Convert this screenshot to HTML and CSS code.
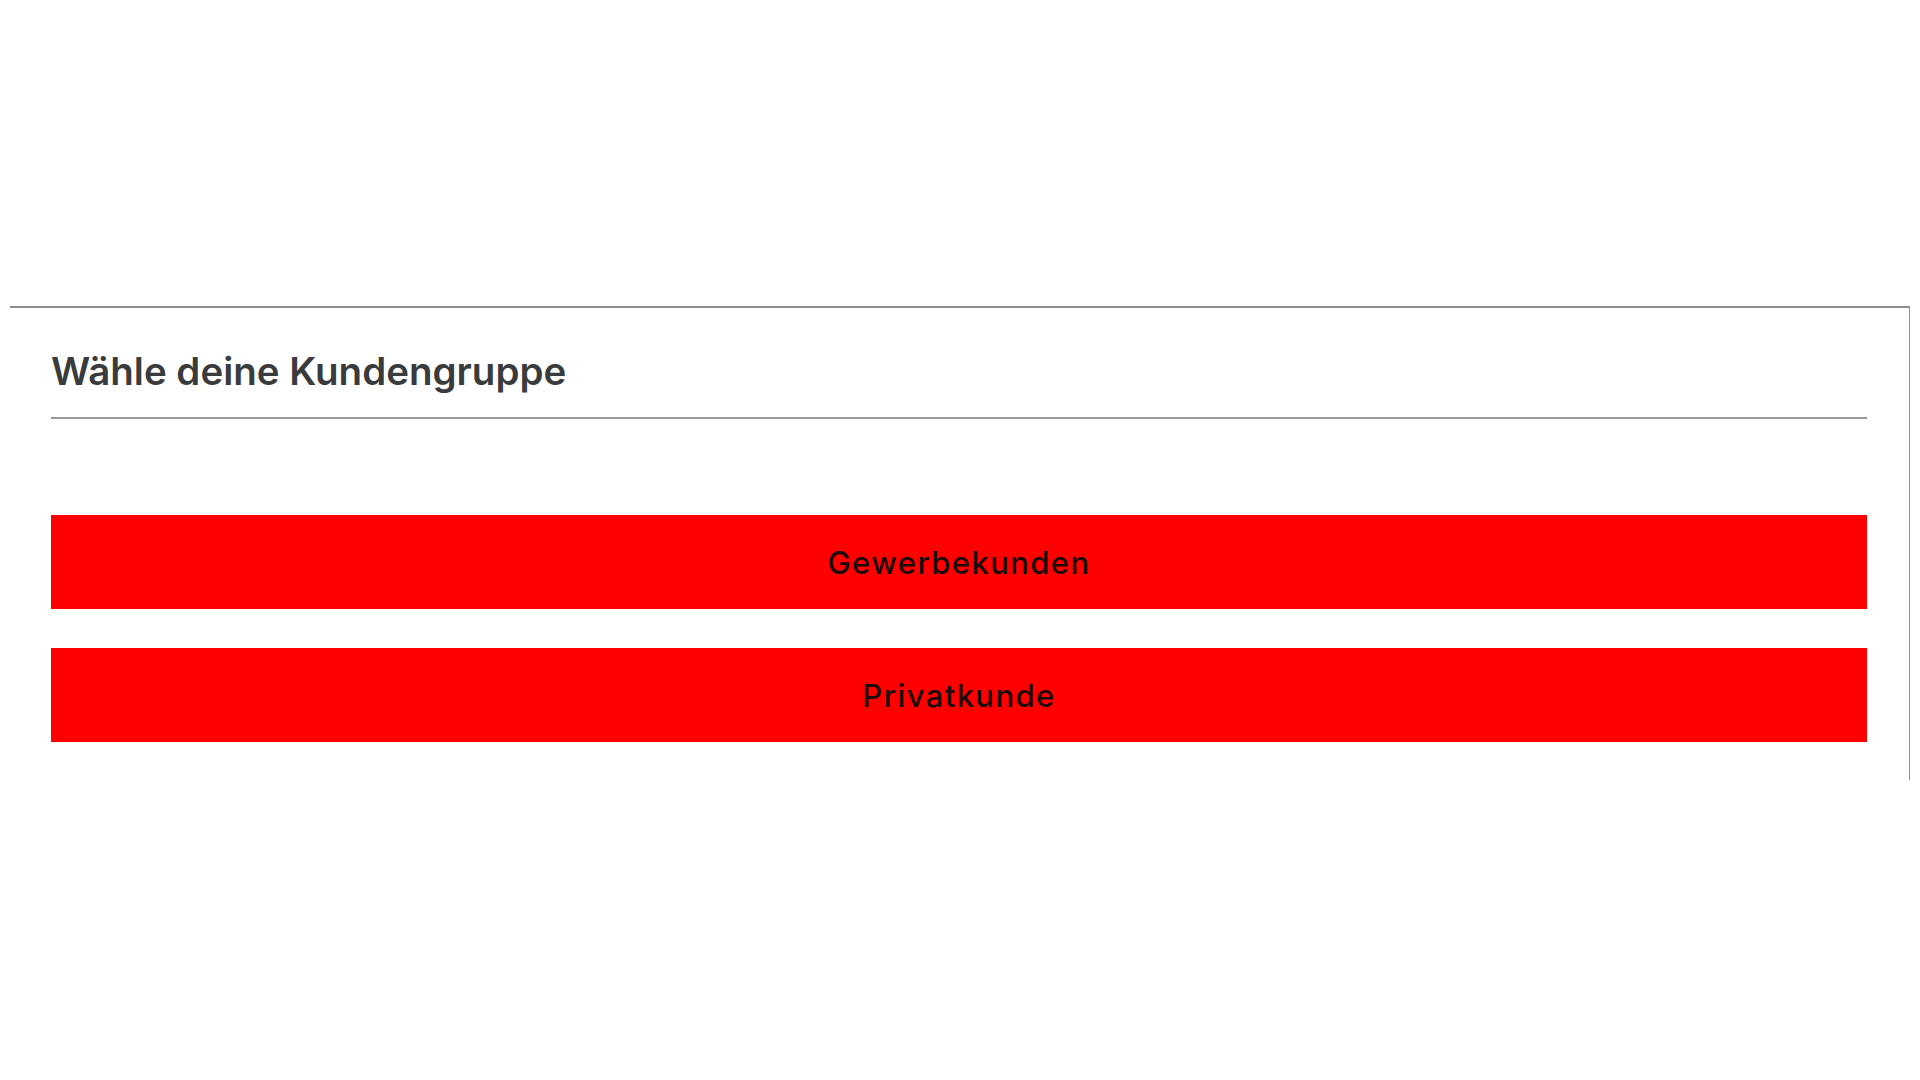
FILE: index.html
```html
<!DOCTYPE html>
<html lang="de">
<head>
<meta charset="utf-8">
<title>Kundengruppe</title>
<link rel="stylesheet" href="styles.css">
</head>
<body>
<section class="panel">
  <header class="panel-head">
    <h2 class="panel-title">Wähle deine Kundengruppe</h2>
  </header>
  <div class="choices">
    <button class="choice" type="button">Gewerbekunden</button>
    <button class="choice" type="button">Privatkunde</button>
  </div>
</section>
</body>
</html>
```

FILE: styles.css
```css
html, body {
  margin: 0;
  padding: 0;
  background: #ffffff;
}

body {
  font-family: Inter, "Noto Sans", "Liberation Sans", sans-serif;
  padding-top: 306px;
}

.panel {
  margin-left: 10px;
  width: 1900px;
  height: 474px;
  border-top: 2px solid #8f8f8f;
  border-right: 1px solid #8f8f8f;
  padding: 0 42px 0 41px;
  box-sizing: border-box;
}

.panel-head {
  height: 111px;
  border-bottom: 2px solid #9a9a9a;
  box-sizing: border-box;
  display: flex;
  align-items: center;
  padding-top: 16px;
}

.panel-title {
  margin: 0;
  font-size: 38.5px;
  font-weight: 600;
  color: #3a3b3d;
  letter-spacing: 0;
}

.choices {
  display: flex;
  flex-direction: column;
  gap: 39px;
  padding-top: 96px;
}

.choice {
  height: 94px;
  width: 100%;
  border: none;
  background: #ff0000;
  color: #1a0a0a;
  font-family: Inter, "Noto Sans", "Liberation Sans", sans-serif;
  font-size: 31px;
  font-weight: 500;
  letter-spacing: 1.4px;
  padding: 0;
  cursor: pointer;
}
```
